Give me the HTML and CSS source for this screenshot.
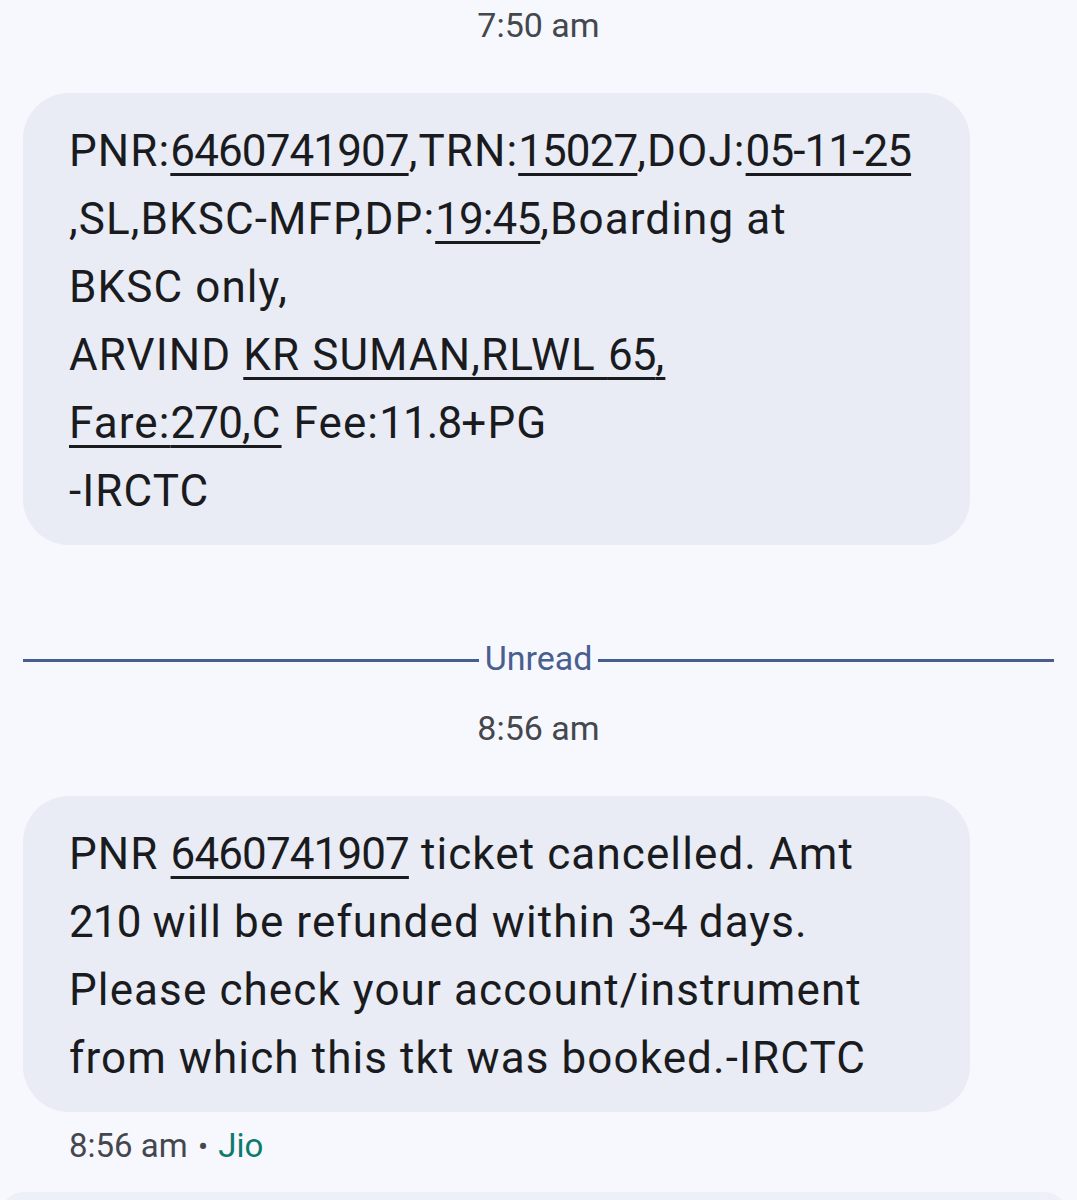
FILE: index.html
```html
<!DOCTYPE html>
<html lang="en">
<head>
<meta charset="utf-8">
<title>Messages</title>
<link rel="stylesheet" href="styles.css">
</head>
<body>
<main class="thread">
  <div class="stamp">7:50 am</div>
  <div class="bubble">
    <p class="msg">PNR:<u class="num">6460741907</u>,TRN:<u class="num">15027</u>,DOJ:<u class="num">05-11-25</u><br>,SL,BKSC-MFP,DP:<u class="num">19:45</u>,Boarding at<br>BKSC only,<br>ARVIND <u>KR SUMAN,RLWL <span class="num">65</span>,</u><br><u>Fare:<span class="num">270</span>,C</u> Fee:<span class="num">11.8</span>+PG<br>-IRCTC</p>
  </div>
  <div class="divider">
    <span class="divider-line"></span>
    <span class="divider-label">Unread</span>
    <span class="divider-line"></span>
  </div>
  <div class="stamp stamp-second">8:56 am</div>
  <div class="bubble">
    <p class="msg">PNR <u class="num">6460741907</u> ticket cancelled. Amt<br><span class="num">210</span> will be refunded within <span class="num">3-4</span> days.<br>Please check your account/instrument<br>from which this tkt was booked.-IRCTC</p>
  </div>
  <div class="meta">8:56 am <span class="dot">•</span> <span class="sim">Jio</span></div>
</main>
<div class="compose"></div>
</body>
</html>
```

FILE: styles.css
```css
html, body {
  margin: 0;
  padding: 0;
}

body {
  background: #f7f8fd;
  font-family: Roboto, "Noto Sans", "Liberation Sans", sans-serif;
  color: #1b1c20;
  overflow: hidden;
}

.thread {
  display: flex;
  flex-direction: column;
  padding: 0 23px;
}

.stamp {
  margin-top: 5px;
  height: 40px;
  line-height: 40px;
  font-size: 34px;
  color: #45474e;
  text-align: center;
}

.stamp-second {
  margin-top: 30px;
}

.bubble {
  margin-top: 48px;
  width: 947px;
  box-sizing: border-box;
  background: #e9ecf4;
  border-radius: 46px;
  padding: 24px 20px 20px 46px;
}

.msg {
  margin: 0;
  font-size: 44px;
  line-height: 68px;
  letter-spacing: 1.1px;
  white-space: nowrap;
  color: #1a1b1f;
}

.msg .num {
  letter-spacing: -0.9px;
}

.msg u {
  text-decoration: underline;
  text-decoration-thickness: 3px;
  text-underline-offset: 7px;
}

.divider {
  margin-top: 93px;
  display: flex;
  align-items: center;
  gap: 6px;
  height: 40px;
}

.divider-line {
  flex: 1;
  height: 3px;
  margin-top: 4px;
  background: #475d8d;
}

.divider-label {
  font-size: 34px;
  line-height: 40px;
  color: #4a5f8f;
}

.meta {
  margin-top: 14px;
  padding-left: 46px;
  height: 40px;
  line-height: 40px;
  font-size: 33px;
  color: #45474e;
}

.dot {
  font-size: 30px;
  margin: 0 2px;
}

.sim {
  color: #0e7a6d;
}

.compose {
  margin: 26px 9px 0 0;
  height: 40px;
  background: #eef0f7;
  border-radius: 24px 24px 0 0;
}
```
